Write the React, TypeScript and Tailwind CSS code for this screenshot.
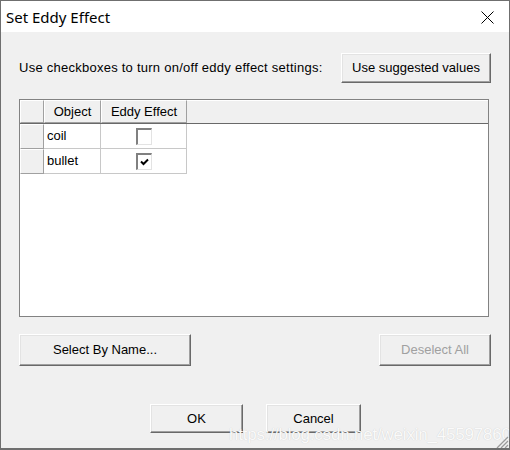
import React from "react";

const raised =
  "border-t border-l border-t-white border-l-white border-r border-b border-r-[#a0a0a0] border-b-[#a0a0a0]";

function Btn({
  children,
  className,
  disabled,
}: {
  children: React.ReactNode;
  className: string;
  disabled?: boolean;
}) {
  return (
    <div
      className={
        "flex items-center justify-center bg-[#f0f0f0] border border-t-white border-l-white border-r-[#696969] border-b-[#696969] shadow-[inset_-1px_-1px_0_#a0a0a0,inset_1px_1px_0_#e3e3e3] " +
        className +
        (disabled ? " text-[#a0a0a0]" : " text-black")
      }
    >
      {children}
    </div>
  );
}

function Check({ checked }: { checked: boolean }) {
  return (
    <div className="w-[16px] h-[17px] bg-white border-t-2 border-l-2 border-t-[#808080] border-l-[#808080] border-r border-b border-r-[#e3e3e3] border-b-[#e3e3e3] flex items-center justify-center">
      {checked && (
        <svg width="9" height="8" viewBox="0 0 9 8">
          <path d="M1 3.5 L3.5 6 L8 1.5" stroke="#000" strokeWidth="2" fill="none" />
        </svg>
      )}
    </div>
  );
}

export default function App() {
  return (
    <div className="w-[510px] h-[450px] border border-[#6f6f6f] border-b-2 bg-[#f0f0f0] flex flex-col relative overflow-hidden text-[13px] font-['Liberation_Sans',Arial,sans-serif] text-black">
      <div className="h-[31px] bg-white flex items-center pl-[5px] shrink-0">
        <span className="font-['Noto_Sans',sans-serif] text-[15px] text-black flex-1 mt-[1px]">
          Set Eddy Effect
        </span>
        <svg width="13" height="13" viewBox="0 0 13 13" className="mr-[15px] mt-[2px]">
          <path d="M0.5 0.5 L12.5 12.5 M12.5 0.5 L0.5 12.5" stroke="#000" strokeWidth="1" />
        </svg>
      </div>
      <div className="flex flex-col pl-[18px]">
        <div className="flex items-center justify-between mt-[21px] pr-[18px]">
          <span className="tracking-[0.25px]">
            Use checkboxes to turn on/off eddy effect settings:
          </span>
          <Btn className="w-[150px] h-[30px]">Use suggested values</Btn>
        </div>
        <div className="mt-[16px] mr-[20px] h-[218px] border border-[#828282] bg-white flex flex-col">
          <div className="flex h-[24px] bg-[#f0f0f0] border-b border-b-[#696969]">
            <div className={"w-[24px] " + raised} />
            <div className={"w-[57px] flex items-center justify-center " + raised}>Object</div>
            <div className={"w-[86px] flex items-center justify-center " + raised}>Eddy Effect</div>
            <div className="flex-1 border-t border-t-white" />
          </div>
          {[
            { name: "coil", checked: false },
            { name: "bullet", checked: true },
          ].map((r) => (
            <div key={r.name} className="flex h-[25px]">
              <div className={"w-[24px] bg-[#f0f0f0] " + raised + " border-r-[#696969] border-b-[#696969]"} />
              <div className="w-[57px] flex items-center pl-[3px] border-r border-b border-[#c8c8c8]">
                {r.name}
              </div>
              <div className="w-[86px] flex items-center justify-center border-r border-b border-[#c8c8c8]">
                <Check checked={r.checked} />
              </div>
            </div>
          ))}
        </div>
        <div className="flex justify-between mt-[17px] pr-[18px]">
          <Btn className="w-[172px] h-[32px]">Select By Name...</Btn>
          <Btn className="w-[112px] h-[32px]" disabled>
            Deselect All
          </Btn>
        </div>
        <div className="flex mt-[38px] pl-[131px] gap-[23px]">
          <Btn className="w-[93px] h-[29px]">OK</Btn>
          <Btn className="w-[95px] h-[29px]">Cancel</Btn>
        </div>
      </div>
      <div className="absolute left-[228px] top-[421px] text-[17px] font-['Liberation_Sans',Arial,sans-serif] text-[#fafafa] [text-shadow:0_0_1px_rgba(0,0,0,0.18)] tracking-[-0.2px]">
        https://blog.csdn.net/weixin_45597860
      </div>
      <svg width="14" height="12" viewBox="0 0 14 12" className="absolute right-0 bottom-0">
        <path d="M13 1 L2 12 M13 5 L6 12 M13 9 L10 12" stroke="#9a9a9a" strokeWidth="1.3" />
      </svg>
    </div>
  );
}
